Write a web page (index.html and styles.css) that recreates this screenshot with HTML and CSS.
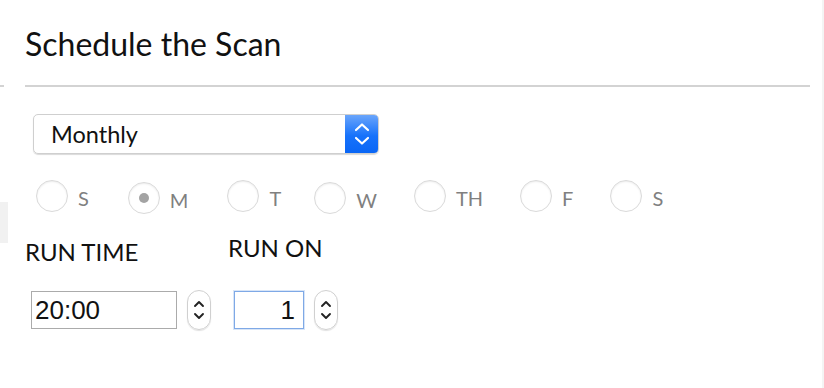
FILE: index.html
```html
<!DOCTYPE html>
<html lang="en">
<head>
<meta charset="UTF-8">
<meta name="viewport" content="width=device-width, initial-scale=1.0">
<title>Schedule the Scan</title>
<link rel="stylesheet" href="styles.css">
</head>
<body>

<div class="page">
  <div class="edge">
    <span class="edge-line"></span>
    <span class="edge-block"></span>
  </div>

  <div class="panel">
    <h2 class="title">Schedule the Scan</h2>

    <div class="select">
      <span class="select-text">Monthly</span>
      <span class="select-btn">
        <svg width="18" height="30" viewBox="0 0 18 30"><path d="M3 11 L9 5.5 L15 11 M3 19 L9 24.5 L15 19" fill="none" stroke="#fff" stroke-width="2.2" stroke-linecap="round" stroke-linejoin="round"/></svg>
      </span>
    </div>

    <div class="days">
      <label class="day"><span class="radio"></span>S</label>
      <label class="day low mon"><span class="radio checked"></span>M</label>
      <label class="day tue"><span class="radio"></span>T</label>
      <label class="day low wed"><span class="radio"></span>W</label>
      <label class="day"><span class="radio"></span>TH</label>
      <label class="day"><span class="radio"></span>F</label>
      <label class="day"><span class="radio"></span>S</label>
    </div>

    <div class="fields">
      <div class="field">
        <div class="field-label">RUN TIME</div>
        <div class="field-row">
          <input class="input time" type="text" value="20:00">
          <span class="spin">
            <svg width="14" height="32" viewBox="0 0 14 32"><path d="M3 12 L7 8 L11 12 M3 20 L7 24 L11 20" fill="none" stroke="#222" stroke-width="1.9" stroke-linecap="round" stroke-linejoin="round"/></svg>
          </span>
        </div>
      </div>
      <div class="field runon">
        <div class="field-label">RUN ON</div>
        <div class="field-row">
          <input class="input day-num" type="text" value="1">
          <span class="spin">
            <svg width="14" height="32" viewBox="0 0 14 32"><path d="M3 12 L7 8 L11 12 M3 20 L7 24 L11 20" fill="none" stroke="#222" stroke-width="1.9" stroke-linecap="round" stroke-linejoin="round"/></svg>
          </span>
        </div>
      </div>
    </div>
  </div>
</div>

</body>
</html>
```

FILE: styles.css
```css
body {
  margin: 0;
  background: #fff;
  font-family: Lato, "Open Sans", sans-serif;
  color: #111;
}
.page {
  display: flex;
  height: 388px;
  border-right: 2px solid #f4f4f4;
  box-sizing: border-box;
}
.edge {
  width: 8px;
  display: flex;
  flex-direction: column;
}
.edge-line {
  display: block;
  width: 4px;
  height: 2px;
  margin-top: 85px;
  background: #d3d3d3;
}
.edge-block {
  display: block;
  width: 8px;
  height: 41px;
  margin-top: 115px;
  background: #f1f1f1;
}
.panel {
  flex: 1;
  padding-left: 17px;
  margin-right: 12px;
}
.title {
  margin: 0;
  height: 87px;
  box-sizing: border-box;
  padding-top: 24px;
  font-size: 32px;
  font-weight: normal;
  line-height: 40px;
  border-bottom: 2px solid #d3d3d3;
}
.select {
  display: flex;
  width: 346px;
  height: 40px;
  margin: 27px 0 0 8px;
  border: 1px solid #cfcfcf;
  border-radius: 5px;
  box-sizing: border-box;
  box-shadow: 0 1px 1px rgba(0,0,0,0.15);
  overflow: hidden;
}
.select-text {
  flex: 1;
  padding-left: 17px;
  font-size: 23.5px;
  line-height: 38px;
}
.select-btn {
  width: 33px;
  display: flex;
  align-items: center;
  justify-content: center;
  background: linear-gradient(#6aa5fb, #1672fb 55%, #0a66f5);
}
.days {
  display: flex;
  gap: 37px;
  margin: 24px 0 0 11px;
  height: 36px;
}
.day {
  display: flex;
  align-items: center;
  gap: 10px;
  height: 32px;
  font-size: 20px;
  color: #808080;
  padding-top: 4px;
  line-height: 20px;
}
.day.low {
  margin-top: 2px;
}
.mon {
  margin-left: 2px;
}
.tue {
  margin-left: 2px;
}
.wed {
  margin-left: -4px;
}
.radio {
  width: 32px;
  height: 32px;
  box-sizing: border-box;
  border: 1px solid #dadada;
  border-radius: 50%;
  box-shadow: inset 0 1px 2px rgba(0,0,0,0.08);
  display: flex;
  align-items: center;
  justify-content: center;
  margin-top: -4px;
}
.radio.checked::after {
  content: "";
  width: 10px;
  height: 10px;
  border-radius: 50%;
  background: #a3a3a3;
}
.fields {
  display: flex;
  margin-top: 24px;
}
.field-label {
  font-size: 24px;
  line-height: 28px;
}
.runon {
  margin-left: 17px;
  margin-top: -4px;
}
.field-row {
  display: flex;
  align-items: center;
  gap: 10px;
  margin-top: 24px;
}
.runon .field-row {
  margin-top: 28px;
}
.input {
  height: 38px;
  box-sizing: border-box;
  font-family: "Liberation Sans", Arial, sans-serif;
  font-size: 26px;
  color: #111;
  border: 1px solid #ababab;
  padding: 0 3px;
  outline: none;
  margin: 0;
}
.time {
  width: 146px;
  margin-left: 6px;
}
.day-num {
  width: 70px;
  margin-left: 6px;
  text-align: right;
  padding-right: 8px;
  border-color: #7fa9e6;
  box-shadow: 0 0 0 1px rgba(127,169,230,0.3);
}
.spin {
  width: 24px;
  height: 40px;
  box-sizing: border-box;
  border: 1px solid #d0d0d0;
  border-radius: 12px;
  box-shadow: 0 1px 1px rgba(0,0,0,0.12);
  display: flex;
  align-items: center;
  justify-content: center;
}
```
